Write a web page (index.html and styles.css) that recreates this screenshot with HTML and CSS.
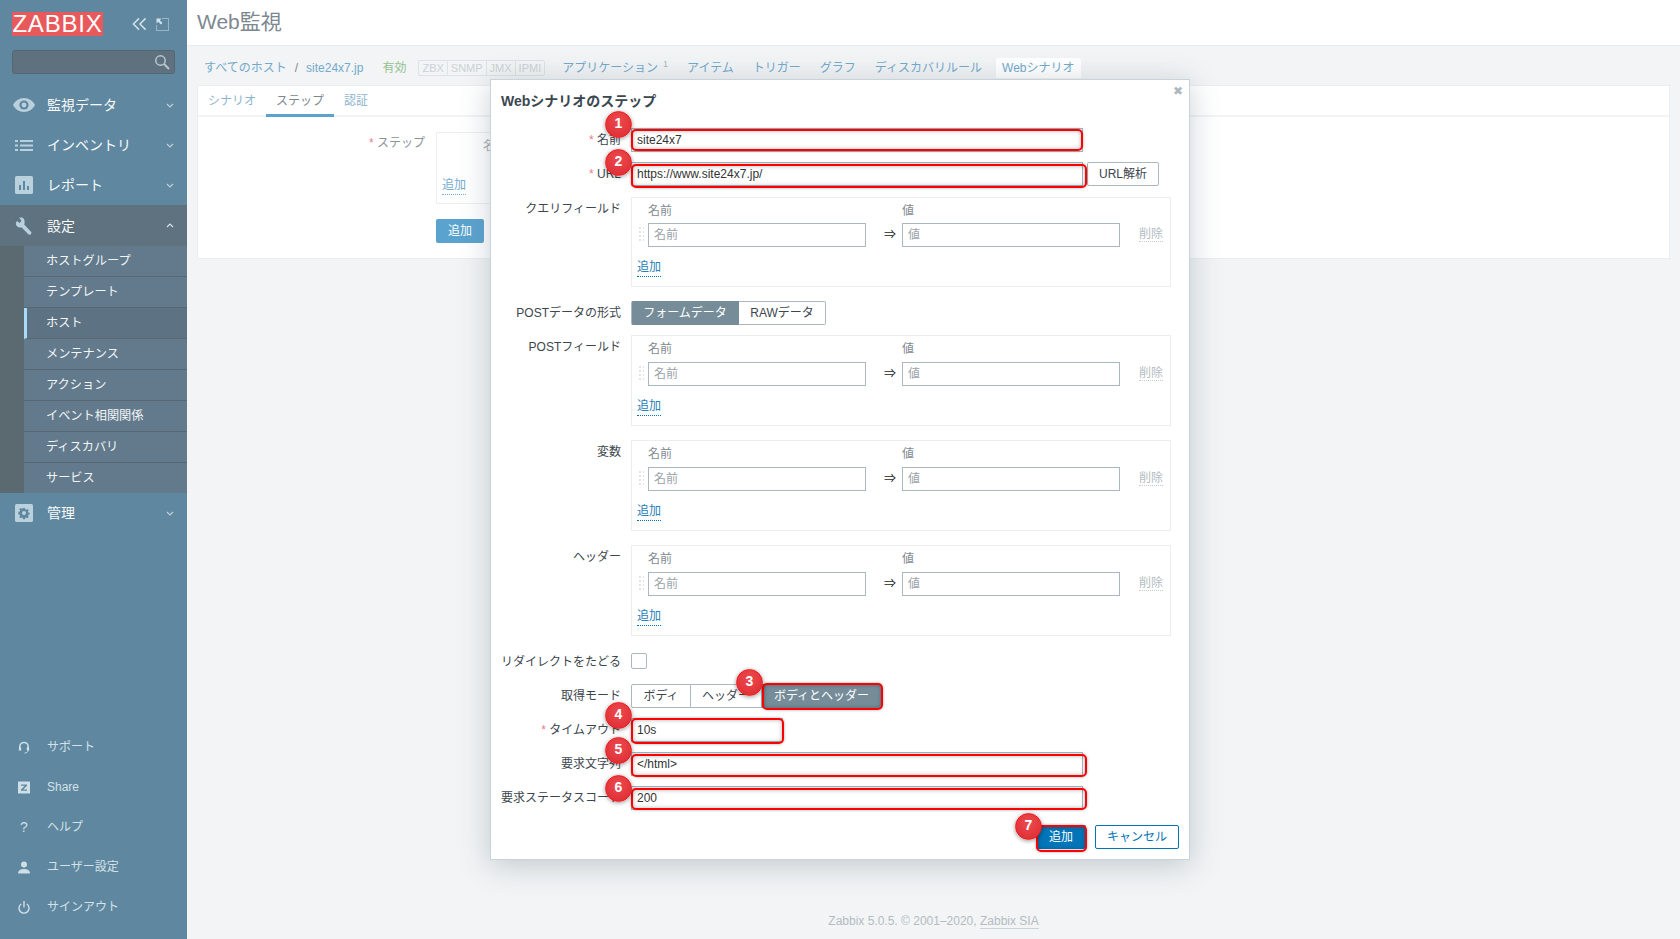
FILE: index.html
```html
<!DOCTYPE html>
<html lang="ja">
<head>
<meta charset="utf-8">
<title>Web監視</title>
<link rel="stylesheet" href="styles.css">
</head>
<body>
<aside class="sidebar">
  <div class="brand">
    <span class="logo">ZABBIX</span>
    <span class="brand-tools">
      <svg class="tool-collapse" viewBox="0 0 16 14"><path d="M7.5 1 1.5 7l6 6M14.500 1l-6 6 6 6" fill="none" stroke="#d3e2ea" stroke-width="1.6"/></svg>
      <svg class="tool-expand" viewBox="0 0 13 13"><path d="M6.500.5h6v12H.5v-6" fill="none" stroke="#d3e2ea" stroke-dasharray="1 1"/><path d="M.5.500h5l-1.700 1.700 2.700 2.700-1.600 1.600L2.200 3.800.5 5.500z" fill="#d3e2ea"/></svg>
    </span>
  </div>
  <div class="search">
    <svg class="search-icon" viewBox="0 0 16 16"><circle cx="6.500" cy="6.500" r="4.700" fill="none" stroke="#b9c8d0" stroke-width="1.500"/><path d="m10 10 5 5" stroke="#b9c8d0" stroke-width="2"/></svg>
  </div>
  <nav class="menu">
    <div class="menu-item">
      <svg class="menu-icon" viewBox="0 0 22 14"><path d="M11 0C6 0 2 3 0 7c2 4 6 7 11 7s9-3 11-7c-2-4-6-7-11-7z" fill="#b9d0dd"/><circle cx="11" cy="7" r="4.600" fill="#5f879f"/><circle cx="11" cy="7" r="2.400" fill="#b9d0dd"/></svg>
      <span class="menu-label">監視データ</span>
      <svg class="chev" viewBox="0 0 8 5"><path d="m1 1 3 3 3-3" fill="none" stroke="#c3d5df" stroke-width="1.100"/></svg>
    </div>
    <div class="menu-item">
      <svg class="menu-icon menu-icon-list" viewBox="0 0 18 11"><path d="M0 0h3v2H0zM5 0h13v2H5zM0 4.500h3v2H0zM5 4.500h13v2H5zM0 9h3v2H0zM5 9h13v2H5z" fill="#b9d0dd"/></svg>
      <span class="menu-label">インベントリ</span>
      <svg class="chev" viewBox="0 0 8 5"><path d="m1 1 3 3 3-3" fill="none" stroke="#c3d5df" stroke-width="1.100"/></svg>
    </div>
    <div class="menu-item">
      <svg class="menu-icon menu-icon-square" viewBox="0 0 18 18"><rect width="18" height="18" rx="1.500" fill="#b9d0dd"/><path d="M4 9h2v5H4zM8 5h2v9H8zM12 10h2v4h-2z" fill="#5f879f"/></svg>
      <span class="menu-label">レポート</span>
      <svg class="chev" viewBox="0 0 8 5"><path d="m1 1 3 3 3-3" fill="none" stroke="#c3d5df" stroke-width="1.100"/></svg>
    </div>
    <div class="menu-item menu-item-open">
      <svg class="menu-icon menu-icon-square" viewBox="0 0 18 18"><path d="M7.200.5 4 .8 6.500 3.400 4.800 6 1.800 4 .8 6.500c0 2.500 2.700 4.600 5.600 3.800l7.200 7.200c1.600 1 3.500-.9 2.600-2.600L9.200 7.500C10.200 4.500 9.500 1.800 7.200.5z" fill="#b9d0dd"/></svg>
      <span class="menu-label">設定</span>
      <svg class="chev" viewBox="0 0 8 5"><path d="m1 4 3-3 3 3" fill="none" stroke="#dbe5ea" stroke-width="1.100"/></svg>
    </div>
    <ul class="submenu">
      <li class="submenu-item">ホストグループ</li>
      <li class="submenu-item">テンプレート</li>
      <li class="submenu-item submenu-item-active">ホスト</li>
      <li class="submenu-item">メンテナンス</li>
      <li class="submenu-item">アクション</li>
      <li class="submenu-item">イベント相関関係</li>
      <li class="submenu-item">ディスカバリ</li>
      <li class="submenu-item">サービス</li>
    </ul>
    <div class="menu-item">
      <svg class="menu-icon menu-icon-square" viewBox="0 0 18 18"><rect width="18" height="18" rx="1.500" fill="#b9d0dd"/><path d="M7.800 3h2.400l.3 1.700 1.300.6 1.500-1 1.600 1.700-1 1.400.5 1.300 1.600.3v2.300l-1.600.3-.5 1.300 1 1.400-1.600 1.600-1.500-1-1.300.6-.3 1.600H7.800l-.3-1.600-1.300-.6-1.500 1-1.600-1.600 1-1.400-.5-1.300-1.600-.3V7.700l1.600-.3.500-1.300-1-1.400 1.600-1.700 1.500 1 1.300-.6z" fill="#5f879f" transform="translate(1.800 1.500) scale(.8)"/><circle cx="9" cy="9" r="2" fill="#b9d0dd"/></svg>
      <span class="menu-label">管理</span>
      <svg class="chev" viewBox="0 0 8 5"><path d="m1 1 3 3 3-3" fill="none" stroke="#c3d5df" stroke-width="1.100"/></svg>
    </div>
  </nav>
  <nav class="usermenu">
    <div class="user-item">
      <svg class="user-icon" viewBox="0 0 12 14"><path d="M1.500 9V6a4.500 4.500 0 0 1 9 0v3" fill="none" stroke="#cfdfe8" stroke-width="1.600"/><rect x=".5" y="6.500" width="2.500" height="4" rx="1" fill="#cfdfe8"/><rect x="9" y="6.500" width="2.500" height="4" rx="1" fill="#cfdfe8"/><path d="M10.500 10c0 2-2 3-4 3" fill="none" stroke="#cfdfe8"/></svg>
      <span>サポート</span>
    </div>
    <div class="user-item">
      <svg class="user-icon" viewBox="0 0 12 12"><rect width="12" height="12" fill="#cfdfe8"/><path d="M3 3h6v1.300L5.200 8H9v1.200H3V7.900L6.800 4.200H3z" fill="#5f879f"/></svg>
      <span>Share</span>
    </div>
    <div class="user-item">
      <span class="user-help">?</span>
      <span>ヘルプ</span>
    </div>
    <div class="user-item">
      <svg class="user-icon" viewBox="0 0 12 12"><circle cx="6" cy="3" r="3" fill="#cfdfe8"/><path d="M0 12c0-3 2-4.500 6-4.500s6 1.500 6 4.500z" fill="#cfdfe8"/></svg>
      <span>ユーザー設定</span>
    </div>
    <div class="user-item">
      <svg class="user-icon" viewBox="0 0 12 13"><path d="M3.200 3a5 5 0 1 0 5.600 0" fill="none" stroke="#cfdfe8" stroke-width="1.400"/><path d="M6 0v6.500" stroke="#cfdfe8" stroke-width="1.400"/></svg>
      <span>サインアウト</span>
    </div>
  </nav>
</aside>

<main class="main">
  <header class="page-head"><h1 class="page-title">Web監視</h1></header>

  <div class="crumbs">
    <a class="crumb-link">すべてのホスト</a>
    <span class="crumb-sep">/</span>
    <a class="crumb-link">site24x7.jp</a>
    <span class="status-on">有効</span>
    <span class="badges"><span class="badge">ZBX</span><span class="badge">SNMP</span><span class="badge">JMX</span><span class="badge">IPMI</span></span>
    <a class="crumb-link crumb-first">アプリケーション<sup class="crumb-count">1</sup></a>
    <a class="crumb-link">アイテム</a>
    <a class="crumb-link">トリガー</a>
    <a class="crumb-link">グラフ</a>
    <a class="crumb-link">ディスカバリルール</a>
    <a class="crumb-link crumb-current">Webシナリオ</a>
  </div>

  <section class="card">
    <div class="tabs">
      <a class="tab">シナリオ</a>
      <a class="tab tab-active">ステップ</a>
      <a class="tab">認証</a>
    </div>
    <div class="card-form">
      <div class="card-label"><span class="req">*</span> ステップ</div>
      <div class="card-controls">
        <div class="steps-box">
          <div class="steps-head">名前</div>
          <a class="steps-add">追加</a>
        </div>
        <button class="btn-page" type="button">追加</button>
      </div>
    </div>
  </section>

  <footer class="page-foot">Zabbix 5.0.5. © 2001–2020, <span class="foot-link">Zabbix SIA</span></footer>
</main>

<div class="modal">
  <span class="modal-close">✖</span>
  <h2 class="modal-title">Webシナリオのステップ</h2>

  <div class="row">
    <label class="row-label"><span class="req">*</span> 名前</label>
    <input class="field field-name" value="site24x7">
  </div>
  <div class="row row-url">
    <label class="row-label"><span class="req">*</span> URL</label>
    <div class="url-line">
      <input class="field field-name" value="https://www.site24x7.jp/">
      <button class="btn-plain" type="button">URL解析</button>
    </div>
  </div>

  <div class="row row-box row-query">
    <label class="row-label row-label-box">クエリフィールド</label>
    <div class="kv">
      <div class="kv-head"></div><div class="kv-head">名前</div><div></div><div class="kv-head">値</div><div></div>
      <span class="drag"></span>
      <input class="field" placeholder="名前">
      <span class="kv-arrow">⇒</span>
      <input class="field" placeholder="値">
      <a class="kv-del">削除</a>
      <a class="kv-add">追加</a>
    </div>
  </div>

  <div class="row">
    <label class="row-label">POSTデータの形式</label>
    <div class="seg">
      <span class="seg-item seg-on seg-form">フォームデータ</span>
      <span class="seg-item seg-raw">RAWデータ</span>
    </div>
  </div>

  <div class="row row-box">
    <label class="row-label row-label-box">POSTフィールド</label>
    <div class="kv">
      <div class="kv-head"></div><div class="kv-head">名前</div><div></div><div class="kv-head">値</div><div></div>
      <span class="drag"></span>
      <input class="field" placeholder="名前">
      <span class="kv-arrow">⇒</span>
      <input class="field" placeholder="値">
      <a class="kv-del">削除</a>
      <a class="kv-add">追加</a>
    </div>
  </div>

  <div class="row row-box">
    <label class="row-label row-label-box">変数</label>
    <div class="kv">
      <div class="kv-head"></div><div class="kv-head">名前</div><div></div><div class="kv-head">値</div><div></div>
      <span class="drag"></span>
      <input class="field" placeholder="名前">
      <span class="kv-arrow">⇒</span>
      <input class="field" placeholder="値">
      <a class="kv-del">削除</a>
      <a class="kv-add">追加</a>
    </div>
  </div>

  <div class="row row-box row-last-box">
    <label class="row-label row-label-box">ヘッダー</label>
    <div class="kv">
      <div class="kv-head"></div><div class="kv-head">名前</div><div></div><div class="kv-head">値</div><div></div>
      <span class="drag"></span>
      <input class="field" placeholder="名前">
      <span class="kv-arrow">⇒</span>
      <input class="field" placeholder="値">
      <a class="kv-del">削除</a>
      <a class="kv-add">追加</a>
    </div>
  </div>

  <div class="row row-check">
    <label class="row-label row-label-check">リダイレクトをたどる</label>
    <span class="check"></span>
  </div>

  <div class="row">
    <label class="row-label">取得モード</label>
    <div class="seg">
      <span class="seg-item seg-body">ボディ</span>
      <span class="seg-item seg-header">ヘッダー</span>
      <span class="seg-item seg-on seg-both">ボディとヘッダー</span>
    </div>
  </div>

  <div class="row">
    <label class="row-label"><span class="req">*</span> タイムアウト</label>
    <input class="field field-time" value="10s">
  </div>
  <div class="row">
    <label class="row-label">要求文字列</label>
    <input class="field field-name" value="&lt;/html&gt;">
  </div>
  <div class="row row-status">
    <label class="row-label">要求ステータスコード</label>
    <input class="field field-name" value="200">
  </div>

  <div class="modal-actions">
    <button class="btn-add" type="button">追加</button>
    <button class="btn-cancel" type="button">キャンセル</button>
  </div>

  <span class="ann ann-1"></span>
  <span class="ann ann-2"></span>
  <span class="ann ann-3"></span>
  <span class="ann ann-4"></span>
  <span class="ann ann-5"></span>
  <span class="ann ann-6"></span>
  <span class="ann ann-7"></span>
  <span class="pin pin-1">1</span>
  <span class="pin pin-2">2</span>
  <span class="pin pin-3">3</span>
  <span class="pin pin-4">4</span>
  <span class="pin pin-5">5</span>
  <span class="pin pin-6">6</span>
  <span class="pin pin-7">7</span>
</div>
</body>
</html>
```
FILE: styles.css
```css
* { box-sizing: border-box; }

html, body { height: 100%; }

body {
  margin: 0;
  display: flex;
  height: 939px;
  overflow: hidden;
  background: #f2f4f5;
  color: #333;
  font: 12px/18px "Liberation Sans", "Noto Sans CJK JP", sans-serif;
}

/* sidebar */
.sidebar {
  width: 187px;
  flex: none;
  display: flex;
  flex-direction: column;
  background: #5f879f;
  color: #f3f6f8;
}
.brand {
  display: flex;
  align-items: center;
  justify-content: space-between;
  padding: 12px 18px 0 12px;
}
.logo {
  width: 91px;
  height: 24px;
  background: #e8595c;
  color: #fff;
  font-size: 24px;
  line-height: 24px;
  text-align: center;
  letter-spacing: .8px;
}
.brand-tools { display: flex; align-items: center; gap: 9px; }
.tool-collapse { width: 15px; height: 14px; }
.tool-expand { width: 13px; height: 13px; }
.search {
  height: 24px;
  margin: 14px 12px 11px;
  display: flex;
  align-items: center;
  justify-content: flex-end;
  padding-right: 4px;
  background: #5f717e;
  border: 1px solid #566572;
  border-radius: 3px;
}
.search-icon { width: 16px; height: 16px; }
.menu-item {
  height: 40px;
  display: flex;
  align-items: center;
  padding-left: 13px;
  position: relative;
}
.menu-item-open { height: 41px; background: #5f7280; }
.menu-icon { width: 22px; height: 14px; flex: none; }
.menu-icon-square { width: 18px; height: 18px; margin: 0 2px; }
.menu-icon-list { width: 18px; height: 11px; margin: 0 2px; }
.menu-label {
  margin-left: 12px;
  flex: 1;
  font-size: 14px;
  color: #f7f9fa;
}
.chev { width: 8px; height: 5px; margin-right: 13px; flex: none; }
.submenu {
  list-style: none;
  margin: 0;
  padding: 0 0 0 24px;
  background: #5b6a70;
}
.submenu-item {
  height: 31px;
  line-height: 31px;
  padding-left: 22px;
  background: #627a8c;
  border-bottom: 1px solid #586873;
  color: #f2f5f7;
  font-size: 12.2px;
}
.submenu-item:last-child { height: 30px; border-bottom: 0; }
.submenu-item-active {
  padding-left: 19px;
  background: #5d7282;
  border-left: 3px solid #a9daf7;
}
.usermenu { margin-top: auto; padding-bottom: 12px; }
.user-item {
  height: 40px;
  display: flex;
  align-items: center;
  gap: 0;
  color: #d3e2ea;
}
.user-icon { width: 12px; height: 13px; margin: 0 17px 0 18px; flex: none; }
.user-help {
  width: 12px;
  margin: 0 17px 0 18px;
  text-align: center;
  font-size: 14px;
  color: #cfdfe8;
}

/* page */
.main {
  flex: 1;
  min-width: 0;
  display: flex;
  flex-direction: column;
}
.page-head {
  height: 46px;
  flex: none;
  padding-left: 10px;
  background: #fff;
  border-bottom: 1px solid #e8ebed;
}
.page-title {
  margin: 8px 0 0;
  font-size: 21px;
  font-weight: 400;
  line-height: 28px;
  color: #7d8890;
}
.crumbs {
  height: 20px;
  margin: 12px 0 0 17px;
  display: flex;
  align-items: center;
  gap: 19px;
}
.crumb-link { color: #72a9cc; white-space: nowrap; }
.crumb-sep { margin: 0 -11px; color: #7d8a92; }
.status-on { color: #93c28f; }
.badges {
  display: flex;
  height: 16px;
  border: 1px solid #dde2e5;
  border-radius: 2px;
  margin-left: -7px;
  font-size: 11px;
}
.badge {
  padding: 0 3px;
  line-height: 14px;
  color: #ccd2d6;
  border-right: 1px solid #dde2e5;
}
.badge:last-child { border-right: 0; }
.crumb-first { margin-left: -2px; }
.crumb-count { font-size: 9px; color: #a9b6bd; margin-left: 5px; line-height: 0; }
.crumb-current {
  height: 20px;
  margin-left: -5px;
  padding: 0 6px;
  line-height: 20px;
  background: #fff;
  border-radius: 2px 2px 0 0;
}
.card {
  margin: 7px 10px 0 10px;
  height: 174px;
  background: #fff;
  border: 1px solid #ebeef0;
}
.tabs {
  height: 31px;
  display: flex;
  border-bottom: 2px solid #f2f4f5;
}
.tab {
  height: 31px;
  padding: 0 10px;
  line-height: 30px;
  color: #8db4cf;
}
.tab-active {
  color: #7d8890;
  border-bottom: 3px solid #5aa3cf;
}
.card-form {
  display: grid;
  grid-template-columns: 227px 1fr;
  column-gap: 11px;
  padding-top: 15px;
}
.card-label { text-align: right; color: #8a949b; line-height: 23px; }
.steps-box {
  width: 300px;
  height: 72px;
  padding: 4px 5px;
  border: 1px solid #eceff1;
}
.steps-head { margin-left: 41px; color: #a4adb3; }
.steps-add {
  display: inline-block;
  margin-top: 21px;
  color: #76accf;
  border-bottom: 1px dotted #76accf;
}
.btn-page {
  display: block;
  width: 48px;
  height: 24px;
  margin-top: 15px;
  padding: 0;
  border: 0;
  border-radius: 2px;
  background: #5aa3cf;
  color: #fff;
  font: inherit;
}
.page-foot {
  margin-top: auto;
  padding-bottom: 9px;
  text-align: center;
  color: #b4bcc1;
}
.foot-link { border-bottom: 1px solid #ccd3d7; }

/* modal */
.modal {
  position: absolute;
  left: 490px;
  top: 79px;
  width: 700px;
  height: 781px;
  padding: 12px 10px 0 10px;
  background: #fff;
  border: 1px solid #c9d3da;
  box-shadow: 0 5px 28px rgba(80, 100, 115, .3);
}
.modal-close {
  position: absolute;
  right: 6px;
  top: 2px;
  font-size: 12px;
  color: #aeb7bd;
}
.modal-title {
  margin: 0 0 17px;
  font-size: 14px;
  line-height: 19px;
  font-weight: 700;
  color: #3b474f;
}
.row {
  display: grid;
  grid-template-columns: 120px 1fr;
  column-gap: 10px;
  margin-bottom: 10px;
}
.row-url { margin-bottom: 11px; }
.row-box { margin-bottom: 14px; }
.row-query { margin-bottom: 14px; }
.row-last-box { margin-bottom: 17px; }
.row-check { margin-bottom: 13px; }
.row-status { margin-bottom: 15px; }
.row-label {
  text-align: right;
  line-height: 24px;
  white-space: nowrap;
  color: #3c464d;
}
.row-label-box { line-height: 24px; }
.row-label-check { line-height: 18px; }
.req { color: #e67e8a; }
.field {
  display: block;
  height: 24px;
  width: 218px;
  padding: 0 5px;
  border: 1px solid #a9b7c0;
  border-radius: 0;
  background: #fff;
  color: #333;
  font: inherit;
  outline: 0;
}
.field::placeholder { color: #9aa3a9; opacity: 1; }
.field-name { width: 452px; }
.field-time { width: 152px; }
.url-line { display: flex; align-items: center; gap: 4px; }
.btn-plain {
  width: 72px;
  height: 24px;
  padding: 0;
  border: 1px solid #a9b7c0;
  border-radius: 2px;
  background: #fff;
  color: #3c464d;
  font: inherit;
}
.kv {
  width: 540px;
  height: 91px;
  padding: 4px 0 0 5px;
  display: grid;
  grid-template-columns: 11px 218px 36px 218px auto;
  grid-template-rows: 22px 24px auto;
  justify-content: start;
  align-content: start;
  border: 1px solid #ebeef0;
}
.row-query .kv { height: 90px; grid-template-rows: 21px 24px auto; }
.kv-head { line-height: 18px; color: #7f8a91; }
.drag {
  width: 7px;
  height: 16px;
  margin-top: 4px;
  background-image: conic-gradient(#e1e5e7 25%, transparent 0);
  background-size: 4px 4px;
}
.kv-arrow { padding-left: 12px; text-align: center; line-height: 24px; font-size: 12px; color: #1a1a1a; }
.kv-del {
  margin-left: 19px;
  height: 17px;
  margin-top: 2px;
  color: #b3bcc2;
  border-bottom: 1px dotted #c6cdd1;
}
.kv-add {
  grid-column: 1 / -1;
  justify-self: start;
  align-self: start;
  margin-top: 11px;
  color: #2880b8;
  border-bottom: 1px dotted #0275b8;
}
.seg { display: flex; height: 24px; }
.seg-item {
  height: 24px;
  line-height: 22px;
  text-align: center;
  background: #fff;
  border: 1px solid #a9b7c0;
  border-left: 0;
  color: #3c464d;
}
.seg-item:first-child { border-left: 1px solid #a9b7c0; border-radius: 2px 0 0 2px; }
.seg-item:last-child { border-radius: 0 2px 2px 0; }
.seg-on { background: #768d99; border-color: #768d99; color: #fff; }
.seg-form { width: 108px; }
.seg-raw { width: 87px; }
.seg-body { width: 60px; }
.seg-header { width: 71px; }
.seg-both { width: 120px; }
.check {
  width: 16px;
  height: 16px;
  border: 1px solid #a9b7c0;
  border-radius: 2px;
}
.modal-actions {
  display: flex;
  justify-content: flex-end;
  gap: 9px;
  padding-right: 0;
}
.btn-add, .btn-cancel {
  height: 24px;
  padding: 0;
  border-radius: 2px;
  font: inherit;
}
.btn-add {
  width: 50px;
  border: 0;
  background: #0275b8;
  color: #fff;
}
.btn-cancel {
  width: 84px;
  background: #fff;
  border: 1px solid #0275b8;
  color: #0275b8;
}

/* tutorial annotations drawn over the form */
.ann {
  position: absolute;
  border: 2px solid #f00;
  border-radius: 5px;
  box-shadow: 0 0 3px rgba(0, 0, 0, .35), inset 0 0 4px rgba(0, 0, 0, .3);
  pointer-events: none;
}
.ann-1 { left: 140px; top: 49px; width: 452px; height: 22px; }
.ann-2 { left: 140px; top: 84px; width: 456px; height: 24px; }
.ann-3 { left: 271px; top: 603px; width: 121px; height: 27px; }
.ann-4 { left: 140px; top: 638px; width: 153px; height: 26px; }
.ann-5 { left: 140px; top: 674px; width: 456px; height: 23px; }
.ann-6 { left: 140px; top: 708px; width: 456px; height: 22px; }
.ann-7 { left: 545px; top: 745px; width: 51px; height: 27px; }
.pin {
  position: absolute;
  width: 27px;
  height: 27px;
  border-radius: 50%;
  border: 1px solid #f01818;
  background: radial-gradient(circle at 50% 35%, #ec4a4f, #dc2a30);
  box-shadow: 0 1px 4px rgba(0, 0, 0, .4);
  color: #fff;
  font-size: 14px;
  font-weight: 700;
  line-height: 23px;
  text-align: center;
}
.pin-1 { left: 114px; top: 31px; }
.pin-2 { left: 114px; top: 69px; }
.pin-3 { left: 245px; top: 589px; }
.pin-4 { left: 114px; top: 622px; }
.pin-5 { left: 114px; top: 657px; }
.pin-6 { left: 114px; top: 695px; }
.pin-7 { left: 524px; top: 733px; }
```
